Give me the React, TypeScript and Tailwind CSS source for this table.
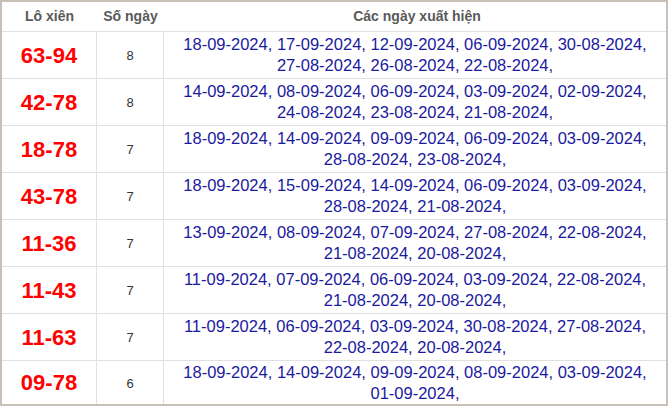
import React from 'react';

const rows = [
  { pair: '63-94', days: 8, dates: ['18-09-2024', '17-09-2024', '12-09-2024', '06-09-2024', '30-08-2024', '27-08-2024', '26-08-2024', '22-08-2024'] },
  { pair: '42-78', days: 8, dates: ['14-09-2024', '08-09-2024', '06-09-2024', '03-09-2024', '02-09-2024', '24-08-2024', '23-08-2024', '21-08-2024'] },
  { pair: '18-78', days: 7, dates: ['18-09-2024', '14-09-2024', '09-09-2024', '06-09-2024', '03-09-2024', '28-08-2024', '23-08-2024'] },
  { pair: '43-78', days: 7, dates: ['18-09-2024', '15-09-2024', '14-09-2024', '06-09-2024', '03-09-2024', '28-08-2024', '21-08-2024'] },
  { pair: '11-36', days: 7, dates: ['13-09-2024', '08-09-2024', '07-09-2024', '27-08-2024', '22-08-2024', '21-08-2024', '20-08-2024'] },
  { pair: '11-43', days: 7, dates: ['11-09-2024', '07-09-2024', '06-09-2024', '03-09-2024', '22-08-2024', '21-08-2024', '20-08-2024'] },
  { pair: '11-63', days: 7, dates: ['11-09-2024', '06-09-2024', '03-09-2024', '30-08-2024', '27-08-2024', '22-08-2024', '20-08-2024'] },
  { pair: '09-78', days: 6, dates: ['18-09-2024', '14-09-2024', '09-09-2024', '08-09-2024', '03-09-2024', '01-09-2024'] },
];

export default function App() {
  return (
    <div className="w-[668px] h-[406px] bg-white border-2 border-[#c8c0b6] flex flex-col overflow-hidden font-['Liberation_Sans',Arial,sans-serif]">
      <div className="h-[30px] shrink-0 flex items-center border-b border-[#e0e0e0] text-[14px] font-bold text-[#5a5a5a]">
        <div className="w-[95px] text-center">Lô xiên</div>
        <div className="w-[67px] text-center">Số ngày</div>
        <div className="flex-1 text-center pl-1">Các ngày xuất hiện</div>
      </div>
      {rows.map((row, i) => (
        <div
          key={row.pair}
          className={`flex ${i === rows.length - 1 ? 'h-[43px]' : 'h-[47px] border-b border-[#e0e0e0]'} shrink-0`}
        >
          <div className="w-[95px] border-r border-[#e0e0e0] flex items-center justify-center text-[22px] font-bold text-[#ff0000]">
            {row.pair}
          </div>
          <div className="w-[67px] border-r border-[#e0e0e0] flex items-center justify-center text-[13px] text-[#333] pt-[2px]">
            {row.days}
          </div>
          <div className="flex-1 flex items-center justify-center text-center text-[16.5px] leading-[21px] text-[#1a1a9e] px-2">
            <div>
              {row.dates.map(d => (
                <React.Fragment key={d}>
                  <span>{d}</span>,{' '}
                </React.Fragment>
              ))}
            </div>
          </div>
        </div>
      ))}
    </div>
  );
}
